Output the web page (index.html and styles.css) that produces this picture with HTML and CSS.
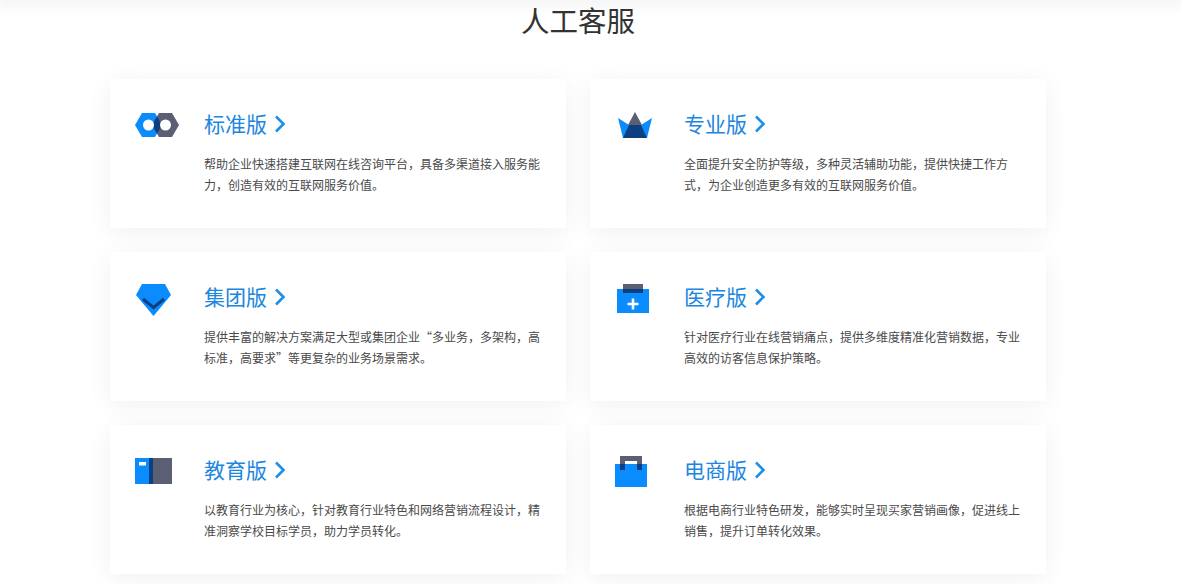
FILE: index.html
```html
<!DOCTYPE html>
<html lang="zh-CN">
<head>
<meta charset="utf-8">
<title>人工客服</title>
<link rel="stylesheet" href="styles.css">
</head>
<body>
<div class="topbar"></div>
<main class="section">
  <h1 class="title">人工客服</h1>
  <div class="grid">
    <article class="card">
      <div class="icon">
        <svg width="50" height="40" viewBox="0 0 50 40"><path fill="#0a8cff" d="M5 21l7-12h13l7 12-7 12H12z"/><path fill="#5a5f73" d="M22 21l7-12h13l7 12-7 12H29z"/><path fill="#0b3f80" d="M27 12.400l5 8.600-5 8.600-5-8.600z"/><circle cx="18.500" cy="21" r="5.500" fill="#fff"/><circle cx="35.500" cy="21" r="5.500" fill="#fff"/></svg>
      </div>
      <div class="body">
        <h2 class="name">标准版<svg class="chev" width="12" height="18" viewBox="0 0 12 18"><path d="M2 1.500l7.500 7.500-7.500 7.500" fill="none" stroke="#1c8fe8" stroke-width="2.600"/></svg></h2>
        <p class="desc">帮助企业快速搭建互联网在线咨询平台，具备多渠道接入服务能力，创造有效的互联网服务价值。</p>
      </div>
    </article>
    <article class="card">
      <div class="icon">
        <svg width="50" height="40" viewBox="0 0 50 40"><path fill="#0a8cff" d="M8 14l11 7 6-6 6 6 11-7-5 20H13z"/><path fill="#0b3f80" d="M19 21h12l6 13H13z"/><path fill="#5a5f73" d="M25 8l7 13H18z"/></svg>
      </div>
      <div class="body">
        <h2 class="name">专业版<svg class="chev" width="12" height="18" viewBox="0 0 12 18"><path d="M2 1.500l7.500 7.500-7.500 7.500" fill="none" stroke="#1c8fe8" stroke-width="2.600"/></svg></h2>
        <p class="desc">全面提升安全防护等级，多种灵活辅助功能，提供快捷工作方式，为企业创造更多有效的互联网服务价值。</p>
      </div>
    </article>
    <article class="card">
      <div class="icon">
        <svg width="50" height="40" viewBox="0 0 50 40"><path fill="#0a8cff" d="M12 7h23l6 11-17.500 21L6 18z"/><path d="M13 22l10.500 8.500L34 22" fill="none" stroke="#0b3f80" stroke-width="3"/></svg>
      </div>
      <div class="body">
        <h2 class="name">集团版<svg class="chev" width="12" height="18" viewBox="0 0 12 18"><path d="M2 1.500l7.500 7.500-7.500 7.500" fill="none" stroke="#1c8fe8" stroke-width="2.600"/></svg></h2>
        <p class="desc">提供丰富的解决方案满足大型或集团企业“多业务，多架构，高标准，高要求”等更复杂的业务场景需求。</p>
      </div>
    </article>
    <article class="card">
      <div class="icon">
        <svg width="50" height="40" viewBox="0 0 50 40"><rect x="7" y="12" width="32" height="24" fill="#0a8cff"/><rect x="13" y="7" width="20" height="5" fill="#5a5f73"/><rect x="13" y="12" width="20" height="4" fill="#0b3f80"/><path d="M23 21.500v11M17.500 27h11" stroke="#fff" stroke-width="2.600"/></svg>
      </div>
      <div class="body">
        <h2 class="name">医疗版<svg class="chev" width="12" height="18" viewBox="0 0 12 18"><path d="M2 1.500l7.500 7.500-7.500 7.500" fill="none" stroke="#1c8fe8" stroke-width="2.600"/></svg></h2>
        <p class="desc">针对医疗行业在线营销痛点，提供多维度精准化营销数据，专业高效的访客信息保护策略。</p>
      </div>
    </article>
    <article class="card">
      <div class="icon">
        <svg width="50" height="40" viewBox="0 0 50 40"><rect x="5" y="8" width="14" height="26" fill="#0a8cff"/><rect x="19" y="8" width="4" height="26" fill="#0b3f80"/><rect x="23" y="8" width="19" height="26" fill="#5a5f73"/><rect x="9" y="12" width="7" height="3.500" fill="#fff"/></svg>
      </div>
      <div class="body">
        <h2 class="name">教育版<svg class="chev" width="12" height="18" viewBox="0 0 12 18"><path d="M2 1.500l7.500 7.500-7.500 7.500" fill="none" stroke="#1c8fe8" stroke-width="2.600"/></svg></h2>
        <p class="desc">以教育行业为核心，针对教育行业特色和网络营销流程设计，精准洞察学校目标学员，助力学员转化。</p>
      </div>
    </article>
    <article class="card">
      <div class="icon">
        <svg width="50" height="40" viewBox="0 0 50 40"><rect x="5" y="14" width="32" height="23" fill="#0a8cff"/><path d="M12.500 14V8.500h17V14" fill="none" stroke="#5a5f73" stroke-width="5"/><path d="M12.500 14v6M29.500 14v6" stroke="#0b3f80" stroke-width="5"/></svg>
      </div>
      <div class="body">
        <h2 class="name">电商版<svg class="chev" width="12" height="18" viewBox="0 0 12 18"><path d="M2 1.500l7.500 7.500-7.500 7.500" fill="none" stroke="#1c8fe8" stroke-width="2.600"/></svg></h2>
        <p class="desc">根据电商行业特色研发，能够实时呈现买家营销画像，促进线上销售，提升订单转化效果。</p>
      </div>
    </article>
  </div>
</main>
</body>
</html>
```
FILE: styles.css
```css
* { box-sizing: border-box; }
html, body { height: 100%; }
body {
  margin: 0;
  background: #fff;
  font-family: "Noto Sans CJK SC", "Liberation Sans", sans-serif;
  overflow: hidden;
}
.topbar {
  height: 0;
  box-shadow: 0 0 14px 4px rgba(0, 0, 0, 0.08);
}
.section {
  width: 936px;
  margin-left: 110px;
}
.title {
  margin: 0;
  height: 79px;
  text-align: center;
  font-size: 28.500px;
  line-height: 40px;
  font-weight: 400;
  color: #333;
}
.grid {
  display: grid;
  grid-template-columns: 456px 456px;
  grid-auto-rows: 149px;
  gap: 24px;
}
.card {
  display: flex;
  padding: 27px 20px 0 20px;
  background: #fff;
  box-shadow: 0 4px 24px rgba(0, 0, 0, 0.06);
}
.icon {
  flex: 0 0 50px;
  margin: -2px 24px 0 0;
  height: 40px;
}
.icon svg { display: block; }
.body { flex: 1; min-width: 0; }
.name {
  display: flex;
  align-items: center;
  gap: 7px;
  margin: -1px 0 12px;
  font-size: 21px;
  line-height: 36px;
  font-weight: 400;
  color: #1c86e0;
}
.chev { flex: none; margin-top: 1px; }
.desc {
  margin: 0;
  font-size: 12px;
  line-height: 21px;
  color: #4a4a4a;
}
```
